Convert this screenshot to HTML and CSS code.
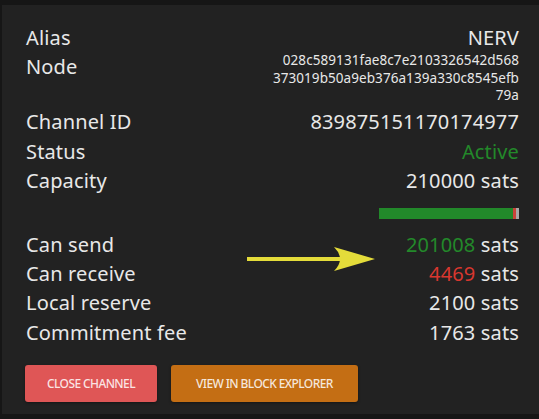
FILE: index.html
```html
<!DOCTYPE html>
<html>
<head>
<meta charset="utf-8">
<link rel="stylesheet" href="styles.css">
</head>
<body>
<div class="panel">
  <div class="row"><span>Alias</span><span>NERV</span></div>
  <div class="row"><span>Node</span><span class="hash"><span>028c589131fae8c7e2103326542d568</span><span>373019b50a9eb376a139a330c8545efb</span><span>79a</span></span></div>
  <div class="row"><span>Channel ID</span><span>839875151170174977</span></div>
  <div class="row"><span>Status</span><span class="green">Active</span></div>
  <div class="row"><span>Capacity</span><span>210000 sats</span></div>
  <div class="barwrap">
    <div class="bar">
      <div class="seg send" style="width:95.7%"></div>
      <div class="seg recv" style="width:2.1%"></div>
      <div class="seg rest"></div>
    </div>
  </div>
  <div class="row"><span>Can send</span><span><span class="green">201008</span> sats</span></div>
  <div class="row"><span>Can receive</span><span><span class="red">4469</span> sats</span></div>
  <div class="row"><span>Local reserve</span><span>2100 sats</span></div>
  <div class="row"><span>Commitment fee</span><span>1763 sats</span></div>
  <div class="actions">
    <button class="btn btn-close">Close channel</button>
    <button class="btn btn-explorer">View in block explorer</button>
  </div>
</div>
<svg class="arrow" width="140" height="40" viewBox="240 240 140 40">
  <line x1="247" y1="259" x2="342" y2="259" stroke="#e4dc3a" stroke-width="4"/>
  <path d="M334 247 L375 259 L334 271 Q346 259 334 247 Z" fill="#e4dc3a"/>
</svg>
</body>
</html>
```
FILE: styles.css
```css
html, body {
  margin: 0;
  padding: 0;
}
body {
  background: #161616;
  width: 539px;
  height: 419px;
  overflow: hidden;
  position: relative;
  font-family: "Noto Sans", "Open Sans", sans-serif;
  color: #e8e8e8;
}
.panel {
  margin: 5px 0 0 2px;
  height: 409px;
  box-sizing: border-box;
  background: #222222;
  padding: 18px 20px 0 24px;
}
.row {
  display: flex;
  justify-content: space-between;
  align-items: flex-start;
  font-size: 20px;
  letter-spacing: 0.15px;
  line-height: 29.4px;
}
.hash {
  display: flex;
  flex-direction: column;
  align-items: flex-end;
  font-size: 13.5px;
  letter-spacing: 0.07px;
  line-height: 17.5px;
  padding-bottom: 2.5px;
}
.green { color: #23892a; }
.red { color: #d8372f; }
.barwrap {
  display: flex;
  justify-content: flex-end;
  margin: 12px 0 11px;
}
.bar {
  display: flex;
  width: 140px;
  height: 11px;
}
.seg { height: 100%; }
.send { background: #22892a; }
.recv { background: #c8443a; }
.rest { flex: 1; background: #a8a8a8; }
.actions {
  display: flex;
  gap: 14px;
  margin: 18px 0 0 -1px;
}
.btn {
  border: none;
  border-radius: 3px;
  height: 37px;
  padding: 0 22px;
  font-family: "Noto Sans", "Open Sans", sans-serif;
  font-size: 12px;
  font-weight: 500;
  letter-spacing: -0.6px;
  text-transform: uppercase;
  color: rgba(255,255,255,0.85);
  box-shadow: 0 1px 3px rgba(0,0,0,0.4);
}
.btn-close { background: #df5656; }
.btn-explorer { background: #c46e14; padding: 0 25px; }
.arrow {
  position: absolute;
  left: 240px;
  top: 240px;
}
```
